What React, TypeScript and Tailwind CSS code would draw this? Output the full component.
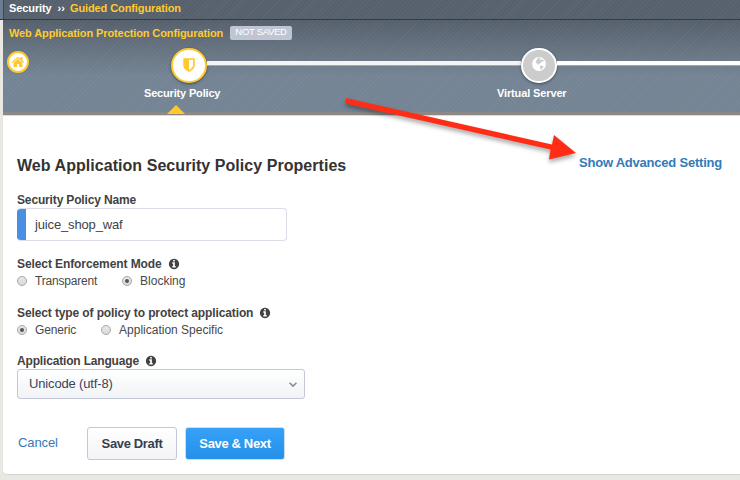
import React from 'react';

const INFO =
  'M1152 1376v-160q0-14-9-23t-23-9h-96v-512q0-14-9-23t-23-9h-320q-14 0-23 9t-9 23v160q0 14 9 23t23 9h96v320h-96q-14 0-23 9t-9 23v160q0 14 9 23t23 9h448q14 0 23-9t9-23zm-128-896v-160q0-14-9-23t-23-9h-192q-14 0-23 9t-9 23v160q0 14 9 23t23 9h192q14 0 23-9t9-23zm640 416q0 209-103 385.5t-279.5 279.5-385.5 103-385.5-103-279.5-279.5-103-385.5 103-385.5 279.5-279.5 385.5-103 385.5 103 279.5 279.5 103 385.5z';
const SHIELD =
  'M1344 960v-640h-448v1137q119-63 213-137 235-184 235-360zm192-768v768q0 86-33.5 170.5t-83 150-118 127.5-126.5 103-121 77.5-89.5 49.5-42.5 20q-12 6-26 6t-26-6q-16-7-42.5-20t-89.5-49.5-121-77.5-126.5-103-118-127.5-83-150-33.5-170.5v-768q0-26 19-45t45-19h1152q26 0 45 19t19 45z';
const HOME =
  'M1472 992v480q0 26-19 45t-45 19h-384v-384h-256v384h-384q-26 0-45-19t-19-45v-480q0-1 .5-3t.5-3l575-474 575 474q1 2 1 6zm223-69l-62 74q-8 9-21 11h-3q-13 0-21-7l-692-577-692 577q-12 8-24 7-13-2-21-11l-62-74q-8-10-7-23.5t11-21.5l719-599q32-26 76-26t76 26l244 204v-195q0-14 9-23t23-9h192q14 0 23 9t9 23v408l219 182q10 8 11 21.5t-7 23.5z';

function Glyph({ d, className }: { d: string; className: string }) {
  return (
    <svg viewBox="0 0 1792 1792" fill="currentColor" className={className}>
      <path d={d} />
    </svg>
  );
}

function Label({ children, className, info }: { children: string; className: string; info?: boolean }) {
  return (
    <div className="flex h-4 items-center gap-[6px] text-[12px] font-bold text-[#424242]">
      <span className={'whitespace-nowrap ' + className}>{children}</span>
      {info && <Glyph d={INFO} className="h-3 w-3" />}
    </div>
  );
}

function Radio({ label, checked, className }: { label: string; checked?: boolean; className: string }) {
  return (
    <label className="flex items-center gap-2">
      <span className="flex h-[10px] w-[10px] items-center justify-center rounded-full border border-[#a6a6a6] bg-linear-to-b from-[#e8e8e8] to-[#dadada]">
        {checked && <span className="h-1 w-1 rounded-full bg-[#555]" />}
      </span>
      <span className={'whitespace-nowrap text-[12px] text-[#484848] ' + className}>{label}</span>
    </label>
  );
}

export default function App() {
  return (
    <div className="relative flex h-[480px] w-[740px] flex-col overflow-hidden bg-[#e9e8e3] font-['Liberation_Sans',Arial,sans-serif]">
      <header className="flex h-[115px] shrink-0 flex-col">
        <nav className="flex h-5 shrink-0 items-center border-b border-[#343b43] bg-[#6b7d92] pl-[3px]">
          <div className="flex h-full flex-1 items-center gap-[6px] border-l border-[#3e464f] bg-[repeating-linear-gradient(135deg,#ffffff08_0_1px,transparent_1px_3px)] bg-[#57616d] pb-[2px] pl-[5px] text-[11px] font-bold text-white">
            <span className="tracking-[-0.1px]">Security</span>
            <span>››</span>
            <span className="-ml-px tracking-[-0.1px] text-[#ffcb2d]">Guided Configuration</span>
          </div>
        </nav>
        <div className="ml-[3px] flex h-[95px] flex-col border-b-[3px] border-[#8b8885] bg-[repeating-linear-gradient(135deg,#ffffff08_0_1px,transparent_1px_3px),linear-gradient(#56606c,#748494_56px)]">
          <div className="flex h-[25px] shrink-0 items-center pl-[6px]">
            <span className="w-[221px] whitespace-nowrap pt-px text-[11px] font-bold tracking-[-0.1px] text-[#ffcb2d]">Web Application Protection Configuration</span>
            <span className="flex h-[14px] w-[62px] items-center justify-center whitespace-nowrap rounded-[2px] bg-[#bfc5d2] text-[9.5px] tracking-[-0.3px] text-white">NOT SAVED</span>
          </div>
          <div className="flex h-[38px] shrink-0 items-start">
            <div className="ml-1 mt-[6px] flex h-[22px] w-[22px] items-center justify-center rounded-full border-[2.5px] border-[#ffc82d] bg-white text-[#ffc82d]">
              <Glyph d={HOME} className="h-[14px] w-[14px] shrink-0" />
            </div>
            <div className="ml-[142px] mt-[3px] flex h-[35px] w-[36px] items-center justify-center rounded-full border-2 border-[#ffc82d] bg-white text-[#ffc82d] shadow-[0_1px_3px_#0006]">
              <Glyph d={SHIELD} className="-mt-[2px] h-4 w-4" />
            </div>
            <div className="mt-[16px] h-[5px] w-[314px] border-b border-[#a2a8ae] bg-[#f4f4f4]" />
            <div className="mt-[3px] flex h-[35px] w-[36px] items-center justify-center rounded-full border-2 border-white bg-[#ccc] shadow-[0_1px_3px_#0006]">
              <svg viewBox="0 0 14 14" className="-mt-[3px] h-[14px] w-[14px]">
                <circle cx="7" cy="7" r="6.900" fill="#fff" />
                <path d="M5.500 1.200 7.200.6 8.500 1.700 7.500 2.600 8.700 3.300 10 2.100 11.500 3.200 11.700 4.700 10.300 4.300 9.200 5.400 8.200 5.900 7.700 7 6.400 6.600 6.900 8.100 5.300 7.200 4.100 5.400 3.900 3.700 5.200 2.700zM7.700 8.700l1.700-.3 2.200 1.200-.8 1.500-1.800 1.400-.8-.4.2-1.700z" fill="#ccc" />
              </svg>
            </div>
            <div className="mt-[16px] h-[5px] flex-1 border-b border-[#a2a8ae] bg-white" />
          </div>
          <div className="flex h-[20px] shrink-0 items-center text-[11px] font-bold text-white">
            <span className="ml-[141px] w-[353px] tracking-[-0.17px]">Security Policy</span>
            <span className="tracking-[-0.13px]">Virtual Server</span>
          </div>
          <svg viewBox="0 0 18 9" className="relative ml-[164px] mt-[2px] h-[9px] w-[18px] shrink-0">
            <path d="M0 9 9 0l9 9z" fill="#ffc82d" />
          </svg>
        </div>
      </header>

      <main className="ml-[3px] flex h-[359px] flex-col rounded-bl border-t border-[#dcdbd9] bg-white pl-[14px] shadow-[0_1px_1px_#d5d4cf]">
        <div className="mt-[38px] flex h-6 items-center">
          <h1 className="w-[562px] whitespace-nowrap text-[16px] font-bold tracking-[0.05px] text-[#333]">
            Web Application Security Policy Properties
          </h1>
          <a className="mb-[6px] whitespace-nowrap text-[13px] font-bold tracking-[-0.22px] text-[#337ab7]">Show Advanced Setting</a>
        </div>
        <div className="mt-[14px]">
          <Label className="tracking-[-0.15px]">Security Policy Name</Label>
          <div className="flex h-[33px] w-[270px] items-center overflow-hidden rounded border border-l-0 border-[#dcdde6]">
            <span className="h-[33px] w-[9px] bg-[#4a90e2]" />
            <span className="ml-[9px] text-[13px] tracking-[-0.15px] text-[#424242]">juice_shop_waf</span>
          </div>
        </div>
        <div className="mt-[15px]">
          <Label info className="tracking-[-0.09px]">Select Enforcement Mode</Label>
          <div className="flex h-[18px] items-center gap-[25px]">
            <Radio label="Transparent" className="tracking-[-0.2px]" />
            <Radio label="Blocking" checked className="" />
          </div>
        </div>
        <div className="mt-[15px]">
          <Label info className="tracking-[-0.115px]">Select type of policy to protect application</Label>
          <div className="flex h-[18px] items-center gap-[25px]">
            <Radio label="Generic" checked className="tracking-[-0.14px]" />
            <Radio label="Application Specific" className="" />
          </div>
        </div>
        <div className="mt-[14px]">
          <Label info className="tracking-[-0.17px]">Application Language</Label>
          <div className="flex h-[30px] w-[288px] items-center justify-between rounded-[3px] border border-[#c4c7d5] bg-linear-to-b from-white to-[#f1f3f6] pl-[11px] pr-[7px] text-[13px] tracking-[-0.15px] text-[#3b4458]">
            <span>Unicode (utf-8)</span>
            <svg viewBox="0 0 8 5" className="h-[5px] w-2" fill="none" stroke="#858b93" strokeWidth="1.6">
              <path d="M.5.7 4 4.1 7.5.7" />
            </svg>
          </div>
        </div>
        <div className="mt-[28px] flex h-[33px] items-center text-[13px]">
          <a className="ml-px w-[69px] pb-[2px] tracking-[-0.1px] text-[#337ab7]">Cancel</a>
          <button className="h-[33px] w-[90px] whitespace-nowrap rounded-[3px] border border-[#c4c7d5] bg-linear-to-b from-white to-[#f3f4f7] font-bold tracking-[-0.35px] text-[#354052]">Save Draft</button>
          <button className="ml-2 h-[33px] w-[100px] whitespace-nowrap rounded-[3px] border border-[#c9dff5] bg-linear-to-b from-[#36a1f7] to-[#2490e8] font-bold tracking-[-0.35px] text-white">Save &amp; Next</button>
        </div>
      </main>

      <svg viewBox="0 0 250 70" className="absolute left-[340px] top-[93px] h-[70px] w-[250px] drop-shadow-[0_3px_2px_#0005]">
        <path d="M6 5 5.500 10.500 210.500 56.500 209 66.500 236 60 214 42 212 51.500z" fill="#ff2d16" />
      </svg>
    </div>
  );
}
